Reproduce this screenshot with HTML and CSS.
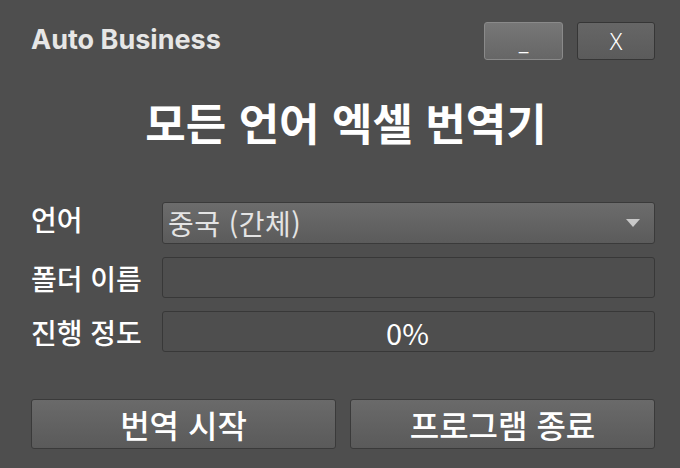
FILE: index.html
```html
<!DOCTYPE html>
<html lang="ko">
<head>
  <meta charset="UTF-8">
  <title>Auto Business</title>
  <link rel="stylesheet" href="styles.css">
</head>
<body>
  <div class="window">
    <!-- 상단 바 -->
    <header class="top-bar">
      <span class="app-name">Auto Business</span>
      <div class="win-buttons">
        <button class="win-btn min-btn">_</button>
        <button class="win-btn close-btn">X</button>
      </div>
    </header>

    <h1 class="title">모든 언어 엑셀 번역기</h1>

    <!-- 입력 폼 -->
    <div class="form">
      <div class="row">
        <label class="label">언어</label>
        <div class="combo">
          <span>중국 (간체)</span>
          <span class="arrow"></span>
        </div>
      </div>
      <div class="row">
        <label class="label">폴더 이름</label>
        <div class="field"></div>
      </div>
      <div class="row">
        <label class="label">진행 정도</label>
        <div class="field progress">0%</div>
      </div>
    </div>

    <div class="actions">
      <button class="action-btn">번역 시작</button>
      <button class="action-btn">프로그램 종료</button>
    </div>
  </div>
</body>
</html>
```

FILE: styles.css
```css
/* 기본 스타일 */
body {
  margin: 0;
  background-color: #4e4e4e;
  font-family: "Noto Sans CJK KR", "Noto Sans", sans-serif;
  color: #fff;
}

.window {
  width: 680px;
  height: 468px;
  box-sizing: border-box;
  padding: 22px 25px 0 31px;
}

/* 상단 바 */
.top-bar {
  display: flex;
  justify-content: space-between;
  align-items: flex-start;
  height: 38px;
}

.app-name {
  font-family: Inter, "Noto Sans", sans-serif;
  font-weight: 700;
  font-size: 27px;
  line-height: 34px;
  color: #e6e6e6;
  margin-top: 1px;
}

.win-buttons {
  display: flex;
  gap: 14px;
}

.win-btn {
  width: 79px;
  height: 38px;
  border-radius: 3px;
  color: #fff;
  font-family: "Noto Sans", sans-serif;
  font-weight: 300;
  font-size: 23px;
  line-height: 1;
  padding: 0;
  cursor: pointer;
}

.min-btn {
  border: 1px solid #8a8a8a;
  background: linear-gradient(#777, #666);
}

.close-btn {
  border: 1px solid #363636;
  background: linear-gradient(#666, #5b5b5b);
  width: 78px;
}

.title {
  margin: 32px 0 0;
  text-align: center;
  font-size: 44px;
  font-weight: 700;
  line-height: 60px;
  padding-left: 6px;
}

/* 폼 */
.form {
  margin-top: 50px;
  display: flex;
  flex-direction: column;
  gap: 13px;
}

.row {
  display: flex;
  align-items: center;
}

.label {
  width: 131px;
  font-size: 28px;
  font-weight: 500;
  line-height: 34px;
  white-space: nowrap;
}

.row:first-child .label {
  margin-top: -8px;
}

.combo,
.field {
  flex: 1;
  height: 42px;
  box-sizing: border-box;
  border-radius: 3px;
}

.combo {
  display: flex;
  align-items: center;
  justify-content: space-between;
  padding: 0 14px 0 5px;
  border: 1px solid #3a3a3a;
  background: linear-gradient(#6c6c6c, #5b5b5b);
  color: #e4e4e4;
  font-size: 28px;
  letter-spacing: 0.5px;
}

.arrow {
  width: 0;
  height: 0;
  border-left: 7px solid transparent;
  border-right: 7px solid transparent;
  border-top: 8px solid #c8c8c8;
}

.field {
  border: 1px solid #383838;
  background-color: #4e4e4e;
  height: 41px;
}

.progress {
  display: flex;
  justify-content: center;
  align-items: center;
  font-size: 29px;
  padding-right: 2px;
}

/* 하단 버튼 */
.actions {
  margin-top: 47px;
  display: flex;
  gap: 14px;
}

.action-btn {
  flex: 1;
  height: 50px;
  border: 1px solid #3a3a3a;
  border-radius: 3px;
  background: linear-gradient(#6a6a6a, #5a5a5a);
  color: #fff;
  font-family: "Noto Sans CJK KR", sans-serif;
  font-size: 32px;
  font-weight: 500;
  line-height: 1;
  padding: 0;
  cursor: pointer;
}
```
